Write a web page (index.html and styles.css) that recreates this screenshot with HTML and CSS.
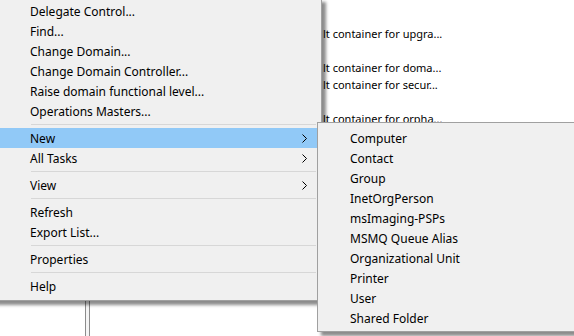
FILE: index.html
```html
<!DOCTYPE html>
<html>
<head>
<meta charset="utf-8">
<link rel="stylesheet" href="styles.css">
</head>
<body>
<div class="window">
  <div class="tree-pane"></div>
  <div class="splitter"></div>
  <div class="list-pane">
    <div class="row"><span class="name"></span><span class="desc"></span></div>
    <div class="row"><span class="name"></span><span class="desc">lt container for upgra...</span></div>
    <div class="row"><span class="name"></span><span class="desc"></span></div>
    <div class="row"><span class="name"></span><span class="desc">lt container for doma...</span></div>
    <div class="row"><span class="name"></span><span class="desc">lt container for secur...</span></div>
    <div class="row"><span class="name"></span><span class="desc"></span></div>
    <div class="row"><span class="name"></span><span class="desc">lt container for orpha...</span></div>
  </div>
</div>

<div class="menu main-menu">
  <div class="item">Delegate Control...</div>
  <div class="item">Find...</div>
  <div class="item">Change Domain...</div>
  <div class="item">Change Domain Controller...</div>
  <div class="item">Raise domain functional level...</div>
  <div class="item">Operations Masters...</div>
  <div class="sep"></div>
  <div class="item active">New<svg class="chev" width="5" height="9" viewBox="0 0 5 9"><path d="M0.5 0.5 L4.5 4.5 L0.5 8.5" fill="none" stroke="#000" stroke-width="1"/></svg></div>
  <div class="item">All Tasks<svg class="chev" width="5" height="9" viewBox="0 0 5 9"><path d="M0.5 0.5 L4.5 4.5 L0.5 8.5" fill="none" stroke="#000" stroke-width="1"/></svg></div>
  <div class="sep"></div>
  <div class="item">View<svg class="chev" width="5" height="9" viewBox="0 0 5 9"><path d="M0.5 0.5 L4.5 4.5 L0.5 8.5" fill="none" stroke="#000" stroke-width="1"/></svg></div>
  <div class="sep"></div>
  <div class="item">Refresh</div>
  <div class="item">Export List...</div>
  <div class="sep"></div>
  <div class="item">Properties</div>
  <div class="sep"></div>
  <div class="item">Help</div>
</div>

<div class="menu sub-menu">
  <div class="item">Computer</div>
  <div class="item">Contact</div>
  <div class="item">Group</div>
  <div class="item">InetOrgPerson</div>
  <div class="item">msImaging-PSPs</div>
  <div class="item">MSMQ Queue Alias</div>
  <div class="item">Organizational Unit</div>
  <div class="item">Printer</div>
  <div class="item">User</div>
  <div class="item">Shared Folder</div>
</div>
</body>
</html>
```

FILE: styles.css
```css
html, body {
  margin: 0;
  padding: 0;
  width: 574px;
  height: 336px;
  overflow: hidden;
  background: #ffffff;
  font-family: "Noto Sans", "Open Sans", sans-serif;
  font-size: 12px;
  color: #000;
}

.window {
  display: flex;
  height: 336px;
}

.tree-pane {
  width: 85px;
  flex: none;
}

.splitter {
  width: 3px;
  flex: none;
  border-left: 1px solid #8c8c8c;
  border-right: 1px solid #8c8c8c;
  background: #f4f4f4;
}

.list-pane {
  flex: 1;
  padding-top: 8px;
  font-size: 11px;
}

.row {
  display: flex;
  height: 17px;
  line-height: 17px;
  white-space: nowrap;
}

.row .name {
  width: 233px;
  flex: none;
}

.menu {
  position: absolute;
  background: #f0f0f0;
  border: 1px solid #a0a0a0;
  box-shadow: 4px 4px 3px rgba(0, 0, 0, 0.45);
  white-space: nowrap;
}

.main-menu {
  left: -10px;
  top: -2px;
  width: 330px;
  padding: 2px 0 4px 0;
}

.sub-menu {
  left: 317px;
  top: 122px;
  width: 280px;
  padding: 5px 0 3px 0;
}

.item {
  position: relative;
  height: 19px;
  padding-top: 1px;
  line-height: 20px;
  padding-left: 39px;
}

.sub-menu .item {
  padding-left: 32px;
}

.item.active {
  background: #91c9f7;
}

.chev {
  position: absolute;
  right: 14px;
  top: 6px;
}

.sep {
  height: 1px;
  margin: 3px 5px 3px 40px;
  background: #d7d7d7;
}
```
